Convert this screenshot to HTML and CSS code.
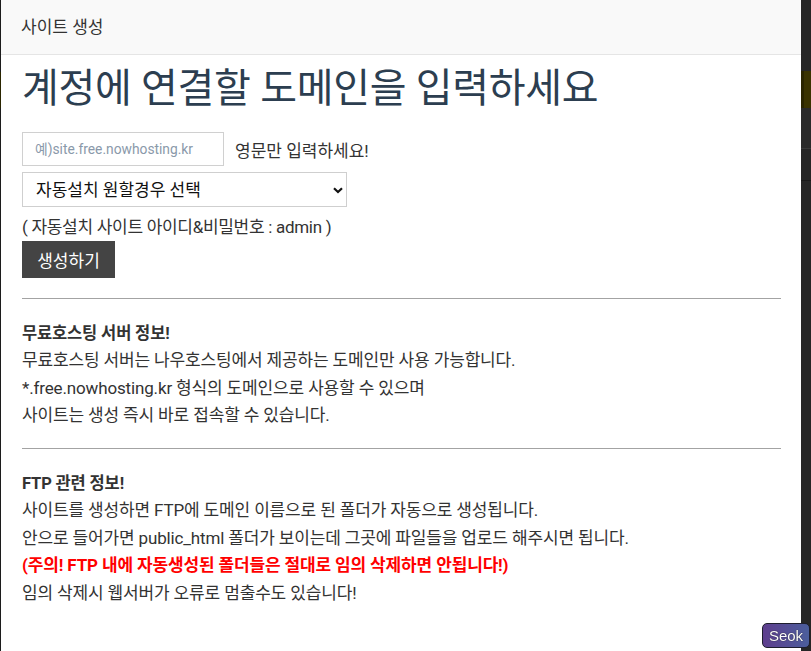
FILE: index.html
```html
<!DOCTYPE html>
<html lang="ko">
<head>
<meta charset="utf-8">
<title>사이트 생성</title>
<link rel="stylesheet" href="styles.css">
</head>
<body>
<div class="screen">
  <div class="edge-left">
    <div class="el-top"></div>
    <div class="el-band"></div>
    <div class="el-rest"></div>
  </div>
  <div class="modal">
    <div class="modal-header">사이트 생성</div>
    <div class="modal-body">
      <h1 class="title">계정에 연결할 도메인을 입력하세요</h1>
      <div class="input-row">
        <input class="domain-input" type="text" placeholder="예)site.free.nowhosting.kr">
        <span class="hint">영문만 입력하세요!</span>
      </div>
      <div class="select-wrap">
        <select class="auto-select">
          <option>자동설치 원할경우 선택</option>
        </select>
        <svg class="select-arrow" width="10" height="7" viewBox="0 0 10 7"><path d="M1 1.2 L5 5 L9 1.2" fill="none" stroke="#111" stroke-width="2.2"/></svg>
      </div>
      <p class="note">( 자동설치 사이트 아이디&amp;비밀번호 : admin )</p>
      <button class="create-btn" type="button">생성하기</button>
      <hr class="divider">
      <div class="info">
        <p class="info-title">무료호스팅 서버 정보!</p>
        <p>무료호스팅 서버는 나우호스팅에서 제공하는 도메인만 사용 가능합니다.</p>
        <p>*.free.nowhosting.kr 형식의 도메인으로 사용할 수 있으며</p>
        <p>사이트는 생성 즉시 바로 접속할 수 있습니다.</p>
      </div>
      <hr class="divider divider-2">
      <div class="info">
        <p class="info-title">FTP 관련 정보!</p>
        <p>사이트를 생성하면 FTP에 도메인 이름으로 된 폴더가 자동으로 생성됩니다.</p>
        <p>안으로 들어가면 public_html 폴더가 보이는데 그곳에 파일들을 업로드 해주시면 됩니다.</p>
        <p class="warn">(주의! FTP 내에 자동생성된 폴더들은 절대로 임의 삭제하면 안됩니다!)</p>
        <p>임의 삭제시 웹서버가 오류로 멈출수도 있습니다!</p>
      </div>
    </div>
  </div>
  <div class="edge-right">
    <div class="er-top"></div>
    <div class="er-band"></div>
    <div class="er-menu"></div>
    <div class="er-gap"></div>
    <div class="er-rest"></div>
  </div>
</div>
<div class="seok">Seok</div>
</body>
</html>
```
FILE: styles.css
```css
html, body {
  margin: 0;
  padding: 0;
  height: 651px;
  overflow: hidden;
  background: #262626;
}
.screen {
  display: flex;
  height: 651px;
  font-family: Roboto, "Noto Sans CJK KR", sans-serif;
}
.edge-left {
  width: 1px;
  display: flex;
  flex-direction: column;
  background: #1c1c1c;
}
.el-top { height: 72px; }
.el-band { height: 36px; background: #2a2500; }
.el-rest { flex: 1; }

.modal {
  width: 800px;
  background: #fff;
  display: flex;
  flex-direction: column;
}
.modal-header {
  box-sizing: border-box;
  height: 55px;
  background: #f9f9f9;
  border-bottom: 1px solid #e5e5e5;
  display: flex;
  align-items: center;
  padding: 0 20px 4px;
  font-size: 17px;
  color: #333;
}
.modal-body {
  padding: 15px 20px 0 21px;
  color: #333;
}
.title {
  margin: 0;
  font-size: 40px;
  font-weight: 400;
  line-height: 38px;
  letter-spacing: -0.3px;
  color: #2c3e50;
}
.input-row {
  margin-top: 24px;
  display: flex;
  align-items: center;
  gap: 11px;
}
.domain-input {
  box-sizing: border-box;
  width: 202px;
  height: 34px;
  border: 1px solid #d0d0d0;
  padding: 0 12px;
  font-family: Roboto, "Noto Sans CJK KR", sans-serif;
  font-size: 13.8px;
  color: #333;
  outline: none;
}
.domain-input::placeholder {
  color: #8a99aa;
}
.hint {
  font-size: 17px;
  color: #333;
}
.select-wrap {
  position: relative;
  margin-top: 6px;
  width: 325px;
  height: 35px;
}
.auto-select {
  appearance: none;
  -webkit-appearance: none;
  box-sizing: border-box;
  width: 325px;
  height: 35px;
  border: 1px solid #cfcfcf;
  border-radius: 0;
  background: #fff;
  padding: 0 30px 0 13px;
  font-family: Roboto, "Noto Sans CJK KR", sans-serif;
  font-size: 17px;
  color: #111;
}
.select-arrow {
  position: absolute;
  right: 4px;
  top: 15px;
  pointer-events: none;
}
.note {
  margin: 8px 0 0;
  font-size: 17px;
  line-height: 24px;
  letter-spacing: -0.3px;
  color: #333;
}
.create-btn {
  margin-top: 2px;
  display: block;
  width: 93px;
  height: 37px;
  border: none;
  background: #444;
  color: #fff;
  font-family: Roboto, "Noto Sans CJK KR", sans-serif;
  font-size: 17px;
  padding: 0;
}
.divider {
  margin: 20px 0 0;
  border: none;
  border-top: 1px solid #a3a3a3;
  height: 0;
}
.divider-2 {
  margin-top: 18.5px;
}
.info {
  padding-top: 20.5px;
  font-size: 17px;
  line-height: 27.5px;
  letter-spacing: -0.15px;
  color: #333;
}
.info p {
  margin: 0;
}
.info .info-title {
  font-weight: 700;
  font-size: 16.5px;
  color: #333;
}
.info .warn {
  font-weight: 700;
  color: #ff0000;
}

.edge-right {
  width: 10px;
  display: flex;
  flex-direction: column;
  background: #262626;
  overflow: hidden;
}
.er-top { height: 71px; }
.er-band {
  height: 37px;
  background: #3a3300;
  border-left: 3px solid #2a2500;
  box-sizing: border-box;
}
.er-menu {
  height: 40px;
  background: #2a2a2a;
  border-bottom: 1px solid #3a3a3a;
}
.er-gap {
  height: 31px;
  border-bottom: 1px solid #1a1a1a;
}
.er-rest { flex: 1; }

.seok {
  position: fixed;
  left: 762px;
  top: 623px;
  width: 48px;
  height: 25px;
  box-sizing: border-box;
  border: 1px solid #1e1e2e;
  border-radius: 5px;
  background: linear-gradient(90deg, #5e3e8e, #4b5e9c);
  color: #fff;
  font-family: "Liberation Sans", Arial, sans-serif;
  font-size: 15px;
  line-height: 23px;
  text-align: center;
  text-shadow: 0 0 1px #000;
}
```
